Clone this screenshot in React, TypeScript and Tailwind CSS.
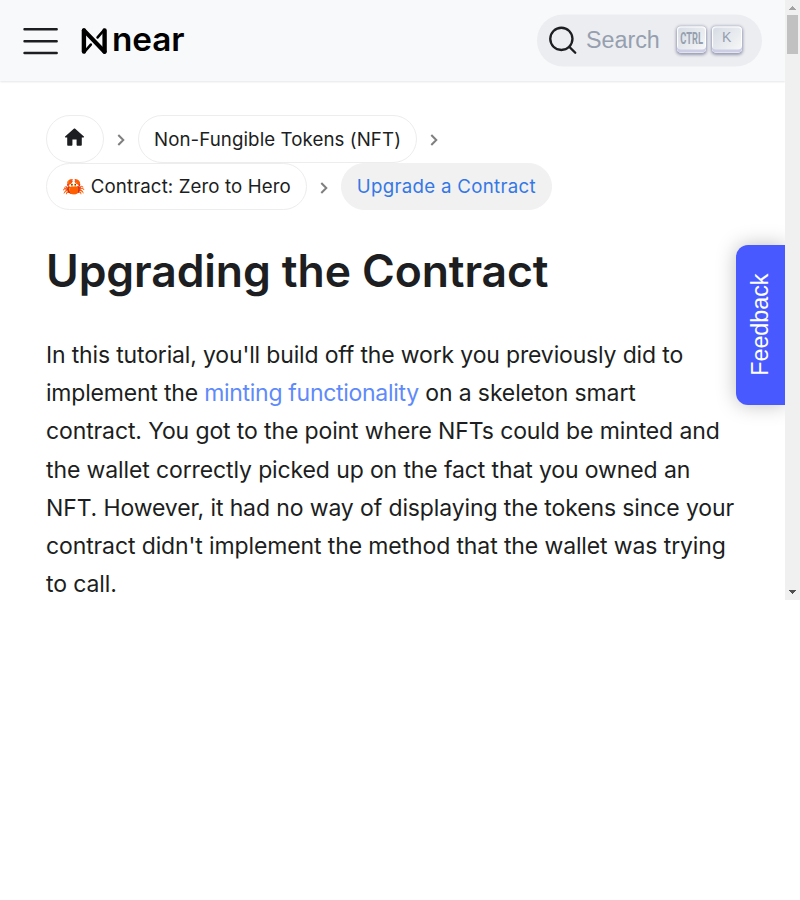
import React from "react";

function Chevron() {
  return (
    <svg className="mx-[11px] h-[12px] w-[12px] shrink-0 translate-y-[1px]" viewBox="0 0 12 12" fill="none" stroke="#7f7f7f" strokeWidth="2">
      <path d="M3.3 1l5 5-5 5" />
    </svg>
  );
}

function Crumb({ children, className = "" }: { children: React.ReactNode; className?: string }) {
  return (
    <span className={`flex items-center rounded-full border px-[15px] text-[18.7px] whitespace-nowrap ${className}`}>{children}</span>
  );
}

function Key({ children }: { children: React.ReactNode }) {
  return (
    <span className="flex h-[26px] w-[29.5px] justify-center rounded-[4px] bg-linear-[-225deg,#d5dbe4,#f8f8f8] text-[#969faf] shadow-[inset_0_-3px_0_0_#cdcde6,inset_0_0_1px_1px_#fff,0_1px_3px_1px_rgba(30,35,90,0.4)]">
      {children}
    </span>
  );
}

function Header() {
  return (
    <header className="flex h-[81px] items-center bg-[#f8f9fb] pr-[23px] pl-[23px] shadow-[0_1px_2px_0_rgba(0,0,0,0.1)]">
      <svg className="h-[28px] w-[36px]" viewBox="0 0 36 28" stroke="#1c1e21" strokeWidth="2.4" strokeLinecap="round">
        <path d="M1.5 2.2h32.2M1.5 14.2h32.2M1.5 26h32.2" />
      </svg>
      <svg className="ml-[22px] h-[28px] w-[27px]" viewBox="0 0 27 28" fill="none" stroke="#000" strokeLinejoin="round" strokeLinecap="round">
        <path d="M2.9 3.5v21" strokeWidth="4.4" />
        <path d="M23.6 3.5v21" strokeWidth="4.4" />
        <path d="M3 3.4l20.5 21.4" strokeWidth="4.2" />
        <path d="M3.4 25l6.4-7.4M23 3l-6.4 7.4" strokeWidth="2.6" />
      </svg>
      <span className="ml-[3.5px] w-[75px] origin-left -translate-y-px scale-x-[1.025] font-[Inter] text-[32.5px] leading-[40px] font-semibold tracking-[-0.1px] text-black">near</span>
      <div className="ml-auto flex h-[52px] w-[225px] -translate-y-[0.5px] items-center rounded-full bg-[#ebedf0] pl-[11px]">
        <svg className="h-[29.5px] w-[29.5px]" viewBox="0 0 20 20" fill="none" stroke="#1c1e21" strokeWidth="1.6" strokeLinecap="round">
          <circle cx="9.06" cy="9.06" r="7.53" />
          <path d="M14.386 14.386l4.0877 4.0877" />
        </svg>
        <span className="ml-[8.5px] w-[90.5px] text-[23.3px] text-[#969faf]">Search</span>
        <span className="flex -translate-y-[1px] gap-[6px]">
          <Key>
            <span className="inline-block scale-x-[0.64] scale-y-[1.1] font-[Roboto] text-[14.5px] leading-[25px] font-bold">CTRL</span>
          </Key>
          <Key>
            <span className="text-[14px] leading-[21px]">K</span>
          </Key>
        </span>
      </div>
    </header>
  );
}

export default function App() {
  return (
    <div className="h-[900px] w-[800px] overflow-hidden bg-white font-['Liberation_Sans',sans-serif]">
      <div className="relative flex h-[600px]">
        <div className="w-[785px] overflow-hidden">
          <Header />
          <main className="px-[46px] pt-[34px] font-[Inter,sans-serif] text-[#1c1e21]">
            <nav>
              <div className="flex items-center">
                <Crumb className="h-[48px] border-[#ededed]">
                  <svg className="mr-[1px] mb-[3px] h-[25px] w-[25px]" viewBox="0 0 24 24" fill="#1c1e21">
                    <path d="M10 19v-5h4v5c0 .55.45 1 1 1h3c.55 0 1-.45 1-1v-7h1.7c.46 0 .68-.57.33-.87L12.67 3.6c-.38-.34-.96-.34-1.34 0l-8.36 7.53c-.34.3-.13.87.33.87H5v7c0 .55.45 1 1 1h3c.55 0 1-.45 1-1z" />
                  </svg>
                </Crumb>
                <Chevron />
                <Crumb className="h-[48px] border-[#ededed] pt-[2px] tracking-[0.08px]">Non-Fungible Tokens (NFT)</Crumb>
                <Chevron />
              </div>
              <div className="flex items-center">
                <Crumb className="h-[47px] border-[#ededed] pt-[1.5px] tracking-[0.1px]">
                  <span className="whitespace-pre font-[Inter,'Noto_Color_Emoji',sans-serif]">🦀 Contract: Zero to Hero</span>
                </Crumb>
                <Chevron />
                <Crumb className="h-[47px] border-[#f1f1f1] bg-[#f1f1f1] pt-[1.5px] tracking-[0.28px] text-[#3578e5]">Upgrade a Contract</Crumb>
              </div>
            </nav>
            <h1 className="mt-[33px] text-[44.5px] leading-[57px] font-semibold tracking-[-0.1px]">Upgrading the Contract</h1>
            <p className="mt-[36px] text-[23px] leading-[38.2px] tracking-[-0.12px] whitespace-nowrap">
              <span className="tracking-[-0.16px]">In this tutorial, you'll build off the work you previously did to</span><br />
              <span className="tracking-[-0.2px]">implement the <a className="tracking-[-0.29px] text-[#5f8afa]">minting functionality</a></span> on a skeleton smart<br />
              contract. You got to the point where NFTs could be minted and<br />
              the wallet correctly picked up on the fact that you owned an<br />
              NFT. However, it had no way of displaying the tokens since your<br />
              contract didn't implement the method that the wallet was trying<br />
              to call.
            </p>
          </main>
        </div>
        <div className="relative flex w-[15px] flex-col items-center bg-[#f0f0f0]">
          <svg className="h-[15px] w-[15px]" viewBox="0 0 15 15" fill="#a3a3a3" shapeRendering="crispEdges">
            <path d="M3 10l4.5-4 4.5 4z" />
          </svg>
          <div className="h-[39px] w-[11px] bg-[#c1c1c1]" />
          <svg className="mt-auto h-[15px] w-[15px]" viewBox="0 0 15 15" fill="#505050" shapeRendering="crispEdges">
            <path d="M3 5h8l-4 4z" />
          </svg>
        </div>
        <div className="absolute top-[214px] left-[705px] h-[220px] w-[80px] overflow-hidden">
          <button className="absolute top-[30.5px] left-[30.5px] flex h-[160px] w-[50px] items-center justify-center rounded-l-[12px] bg-[#485aff] text-white shadow-[0_0_20px_rgba(0,0,0,0.25)]">
            <span className="-rotate-90 text-[23.3px] leading-none">Feedback</span>
          </button>
        </div>
      </div>
    </div>
  );
}
